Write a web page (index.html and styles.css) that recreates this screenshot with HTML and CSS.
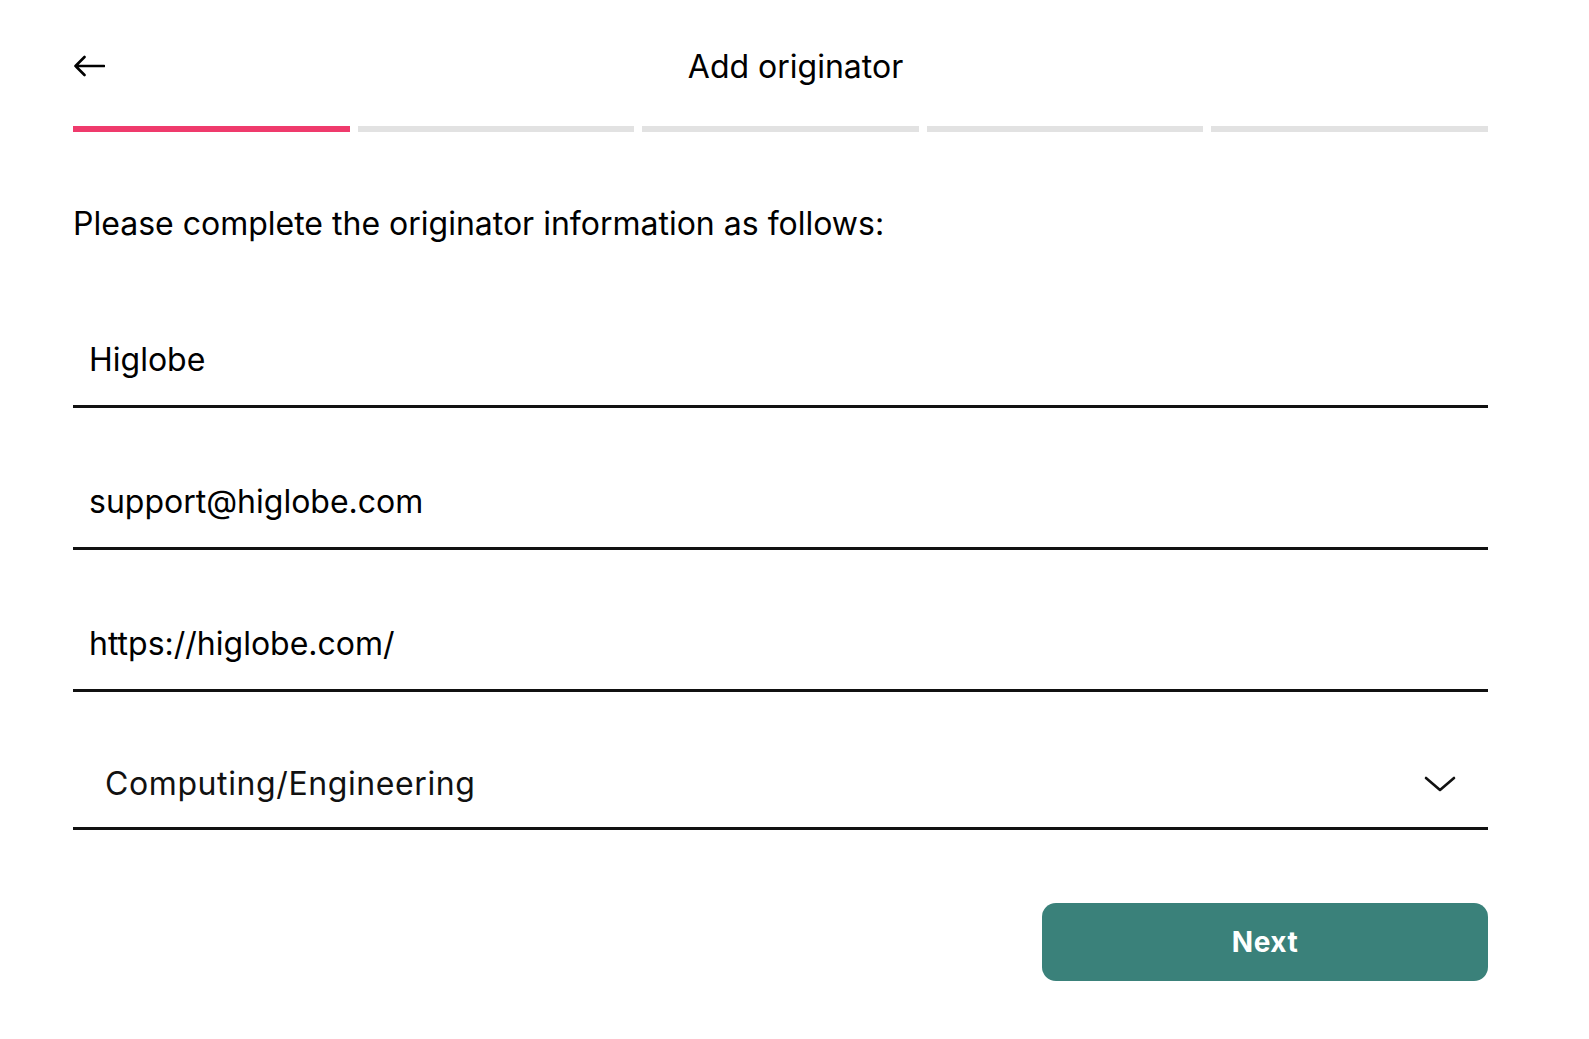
FILE: index.html
```html
<!DOCTYPE html>
<html lang="en">
<head>
<meta charset="utf-8">
<title>Add originator</title>
<link rel="stylesheet" href="styles.css">
</head>
<body>
<main class="page">
  <header class="topbar">
    <button class="back" aria-label="Back">
      <svg width="32" height="22" viewBox="0 0 32 22" fill="none" stroke="#000" stroke-width="2.6" stroke-linecap="round" stroke-linejoin="round">
        <path d="M31 11H2.5M11.5 2L2.5 11l9 9"/>
      </svg>
    </button>
    <h1 class="title">Add originator</h1>
    <span class="spacer"></span>
  </header>
  <div class="progress">
    <span class="seg active"></span>
    <span class="seg"></span>
    <span class="seg"></span>
    <span class="seg"></span>
    <span class="seg"></span>
  </div>
  <p class="intro">Please complete the originator information as follows:</p>
  <form class="form">
    <div class="field"><input class="input" type="text" value="Higlobe"></div>
    <div class="field"><input class="input" type="text" value="support@higlobe.com"></div>
    <div class="field"><input class="input" type="text" value="https://higlobe.com/"></div>
    <div class="field select">
      <span class="select-value">Computing/Engineering</span>
      <svg class="chev" width="32" height="18" viewBox="0 0 32 18" fill="none" stroke="#111" stroke-width="2.6" stroke-linecap="round" stroke-linejoin="round">
        <path d="M2 3l14 12L30 3"/>
      </svg>
    </div>
    <div class="actions">
      <button type="button" class="next">Next</button>
    </div>
  </form>
</main>
</body>
</html>
```
FILE: styles.css
```css
* { box-sizing: border-box; }
html, body { margin: 0; background: #fff; }
body {
  font-family: Inter, "Noto Sans", sans-serif;
  color: #000;
}
.page {
  padding: 40px 101px 0 73px;
}
.topbar {
  display: flex;
  align-items: center;
  height: 52px;
}
.back {
  width: 120px;
  padding: 0;
  border: 0;
  background: none;
  display: flex;
  align-items: center;
  cursor: pointer;
}
.title {
  flex: 1;
  margin: 0;
  text-align: center;
  font-size: 32px;
  font-weight: 400;
  padding-left: 30px;
}
.spacer { width: 120px; }
.progress {
  display: flex;
  gap: 8px;
  margin-top: 34px;
}
.seg {
  flex: 1;
  height: 6px;
  background: #e2e2e2;
}
.seg.active { background: #ef3a6c; }
.intro {
  margin: 74px 0 0;
  font-size: 32px;
  line-height: 36px;
}
.form {
  margin-top: 24px;
  display: flex;
  flex-direction: column;
}
.field {
  padding: 76px 0 27px;
  border-bottom: 3px solid #111;
}
.input {
  display: block;
  width: 100%;
  border: 0;
  outline: none;
  padding: 0 16px;
  margin: 0;
  font-family: inherit;
  font-size: 32px;
  line-height: 36px;
  height: 36px;
  color: #000;
  background: transparent;
}
.select {
  display: flex;
  align-items: center;
  justify-content: space-between;
  padding: 74px 32px 25px 32px;
}
.select-value {
  font-size: 32px;
  line-height: 36px;
  letter-spacing: 0.6px;
  color: #111;
}
.chev { display: block; }
.actions {
  display: flex;
  justify-content: flex-end;
  margin-top: 73px;
}
.next {
  width: 446px;
  height: 78px;
  border: 0;
  border-radius: 14px;
  background: #3a817a;
  color: #fff;
  font-family: inherit;
  font-size: 28px;
  font-weight: 700;
  letter-spacing: 0.5px;
  cursor: pointer;
}
```
